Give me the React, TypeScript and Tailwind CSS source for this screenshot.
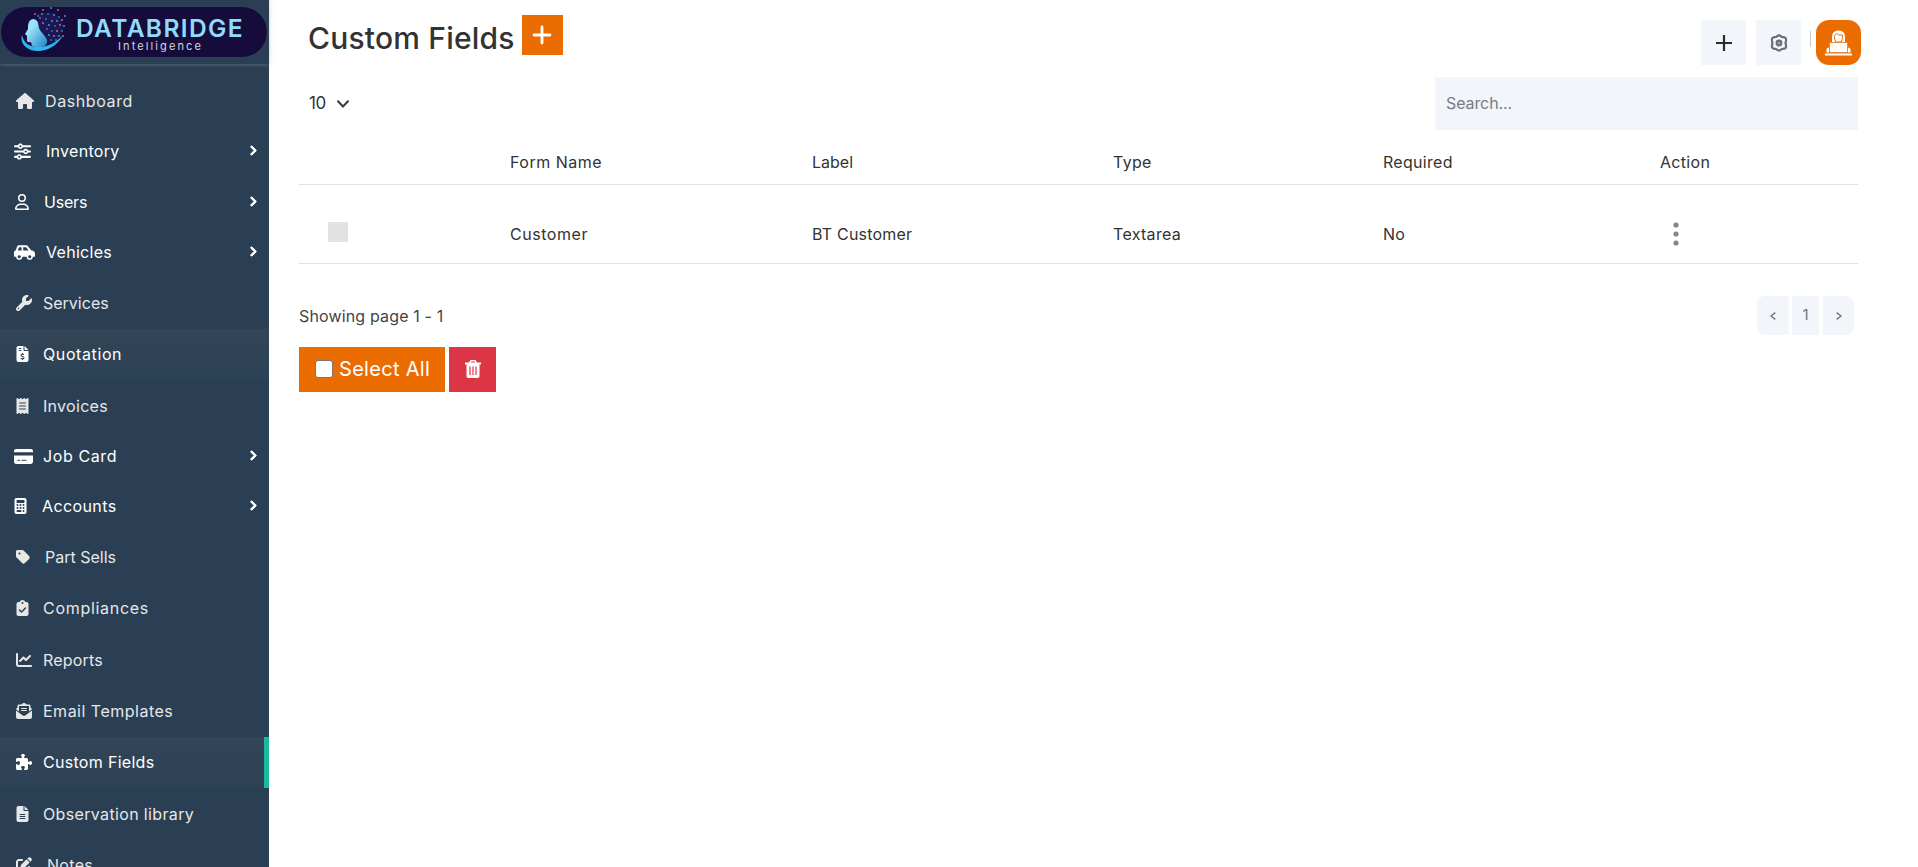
import type { IconType } from 'react-icons';
import {
  FaHouse, FaSliders, FaRegUser, FaWrench, FaFileInvoiceDollar, FaReceipt, FaCreditCard,
  FaCalculator, FaTag, FaClipboardCheck, FaChartLine, FaEnvelopeOpenText, FaPuzzlePiece, FaFileLines, FaPenToSquare,
} from 'react-icons/fa6';
import { FaCarSide, FaChevronRight } from 'react-icons/fa';

interface NavItem {
  label: string;
  icon: IconType;
  iconSize: string;
  row: string;
  iconBox: string;
  text: string;
  group?: boolean;
  hover?: boolean;
  active?: boolean;
}

const navItems: NavItem[] = [
  { label: 'Dashboard', icon: FaHouse, iconSize: 'h-4 w-[18px]', row: 'h-[51px] pb-px', iconBox: 'w-[45px] pl-4', text: 'tracking-[0.6px]' },
  { label: 'Inventory', icon: FaSliders, iconSize: 'h-[17px] w-[17px]', row: 'h-[50px] pb-0.5', iconBox: 'w-[46px] pl-[14px]', text: 'tracking-[0.3px]', group: true },
  { label: 'Users', icon: FaRegUser, iconSize: 'h-4 w-[14px]', row: 'h-[50px]', iconBox: 'w-[44px] pl-[15px]', text: 'tracking-[-0.2px]', group: true },
  { label: 'Vehicles', icon: FaCarSide, iconSize: 'h-[17px] w-[21px]', row: 'h-[50px]', iconBox: 'w-[46px] pl-[14px]', text: 'tracking-[0.3px]', group: true },
  { label: 'Services', icon: FaWrench, iconSize: 'h-4 w-4', row: 'h-[52px]', iconBox: 'w-[43px] pl-4', text: 'tracking-[0px]' },
  { label: 'Quotation', icon: FaFileInvoiceDollar, iconSize: 'h-4 w-[13px]', row: 'h-[51px] pb-px', iconBox: 'w-[43px] pl-4', text: 'tracking-[0.6px]', hover: true },
  { label: 'Invoices', icon: FaReceipt, iconSize: 'h-4 w-[13px]', row: 'h-[51px]', iconBox: 'w-[43px] pl-4', text: 'tracking-[0.3px]' },
  { label: 'Job Card', icon: FaCreditCard, iconSize: 'h-[17px] w-[19px]', row: 'h-[50px]', iconBox: 'w-[43px] pl-[14px]', text: 'tracking-[0.6px]', group: true },
  { label: 'Accounts', icon: FaCalculator, iconSize: 'h-4 w-[13px]', row: 'h-[50px]', iconBox: 'w-[42px] pl-[14px]', text: 'tracking-[0.4px]', group: true },
  { label: 'Part Sells', icon: FaTag, iconSize: 'h-4 w-[14px]', row: 'h-[52px]', iconBox: 'w-[45px] pl-4', text: 'tracking-[0px]' },
  { label: 'Compliances', icon: FaClipboardCheck, iconSize: 'h-4 w-[13px]', row: 'h-[51px] pb-px', iconBox: 'w-[43px] pl-4', text: 'tracking-[0.7px]' },
  { label: 'Reports', icon: FaChartLine, iconSize: 'h-4 w-4', row: 'h-[52px]', iconBox: 'w-[43px] pl-4', text: 'tracking-[0.2px]' },
  { label: 'Email Templates', icon: FaEnvelopeOpenText, iconSize: 'h-4 w-4', row: 'h-[51px] pb-px', iconBox: 'w-[43px] pl-4', text: 'tracking-[0.5px]' },
  { label: 'Custom Fields', icon: FaPuzzlePiece, iconSize: 'h-4 w-4', row: 'h-[51px] pb-px', iconBox: 'w-[43px] pl-4', text: 'tracking-[0.3px]', active: true },
  { label: 'Observation library', icon: FaFileLines, iconSize: 'h-4 w-[13px]', row: 'h-[52px]', iconBox: 'w-[43px] pl-4', text: 'tracking-[0.35px]' },
  { label: 'Notes', icon: FaPenToSquare, iconSize: 'h-4 w-4', row: 'h-[51px] pb-0.5', iconBox: 'w-[47px] pl-4', text: 'tracking-[0.3px]' },
];

// x, y and colour of the particles behind the head in the logo
const particles: [number, number, string][] = [
  [23, 3, '#c86a9a'], [31, 1, '#5a9be0'], [38, 3, '#d96f8f'], [15, 7, '#c86a9a'], [28, 7, '#3e74c9'], [34, 8, '#5a9be0'],
  [39, 10, '#3e74c9'], [20, 11, '#8a5fc0'], [26, 12, '#3e74c9'], [32, 14, '#d96f8f'], [37, 14, '#5a9be0'], [42, 13, '#d96f8f'],
  [23, 16, '#d96f8f'], [29, 18, '#5a9be0'], [35, 19, '#3e74c9'], [40, 18, '#c86a9a'], [44, 19, '#5a9be0'], [27, 22, '#8a5fc0'],
  [32, 24, '#3e74c9'], [37, 24, '#d96f8f'], [42, 24, '#3e74c9'], [29, 28, '#5a9be0'], [34, 29, '#c86a9a'], [39, 29, '#5a9be0'],
  [43, 29, '#d96f8f'], [31, 33, '#3e74c9'], [36, 33, '#8a5fc0'], [22, 7, '#5a9be0'], [18, 9, '#3e74c9'], [45, 9, '#5a9be0'],
];

function Logo() {
  return (
    <div className="flex h-[50px] w-[266px] rounded-full bg-[#160c3b]">
      <svg viewBox="0 0 46 48" className="ml-[19px] h-[48px] w-[46px] shrink-0">
        <defs>
          <linearGradient id="face" x1="0" x2="1" y1="0" y2="1">
            <stop offset="0.3" stopColor="#9be3fb" />
            <stop offset="1" stopColor="#1c7fc4" />
          </linearGradient>
        </defs>
        <path d="M18 7Q36 2 42 14Q46 30 29 38L18 22Z" fill="#1c2463" opacity="0.6" />
        {particles.map(([x, y, fill]) => (
          <circle key={`${x}-${y}`} cx={x} cy={y} r="0.9" fill={fill} />
        ))}
        <path
          d="M13 12C8 13 8 18 8 22L5 27L7 29L7 34Q8 36 11 35L12 39Q18 42 25 39C31 33 23 28 20 23C17 18 20 13 13 12Z"
          fill="url(#face)"
        />
        <path d="M2 28C-1 38 9 45 20 44C31 43 39 36 43 28C37 35 28 40 19 40C10 40 4 37 2 28Z" fill="#2eb5ee" />
      </svg>
      <div className="ml-[10px] flex flex-1 flex-col pt-2">
        <span className="text-[24.5px] leading-[26px] font-semibold tracking-[1.4px] text-[#8fdcfa]">DATABRIDGE</span>
        <span className="-mt-[2px] ml-[42px] text-[11px] leading-[14px] tracking-[2.1px] text-[#d6d3e2]">Intelligence</span>
      </div>
    </div>
  );
}

function Sidebar() {
  return (
    <aside className="flex w-[269px] shrink-0 flex-col bg-[#2a3f54]">
      <div className="mb-3 h-16 shrink-0 pt-[7px] pl-px shadow-[0_0_4px_rgba(160,160,160,0.6)]">
        <Logo />
      </div>
      {navItems.map((item) => {
        const Icon = item.icon;
        const lit = item.group || item.hover || item.active;
        return (
          <div
            key={item.label}
            className={`flex shrink-0 items-center ${item.row} ${lit ? 'text-white' : 'text-[#e7e7e7]'} ${
              item.hover || item.active ? 'bg-linear-to-b from-[#334556] to-[#2c4257]' : ''
            } ${item.active ? 'border-r-[5px] border-[#1abb9c]' : ''}`}
          >
            <span className={`shrink-0 ${item.iconBox}`}>
              <Icon className={item.iconSize} />
            </span>
            <span className={`text-[16px] ${item.text}`}>{item.label}</span>
            {item.group && <FaChevronRight className="mr-[10px] mb-0.5 ml-auto h-[11px] w-[11px] stroke-current stroke-[45px]" />}
          </div>
        );
      })}
    </aside>
  );
}

function TopBar() {
  return (
    <header className="flex items-start pt-[15px]">
      <h1 className="pt-px pl-[9px] text-[30px] leading-[44px] font-medium tracking-[0.2px]">Custom Fields</h1>
      <button className="ml-[7px] flex h-10 w-[41px] items-center justify-center bg-[#eb6c00]">
        <svg viewBox="0 0 20 20" className="h-5 w-5" stroke="#fff" strokeWidth="2.8" strokeLinecap="round">
          <path d="M2 10H18M10 2V18" />
        </svg>
      </button>
      <div className="mt-[5px] mr-[-3px] ml-auto flex">
        <button className="flex h-[45px] w-[45px] items-center justify-center bg-[#f2f5fa]">
          <svg viewBox="0 0 16 16" className="h-4 w-4" stroke="#2b2b2b" strokeWidth="2.2">
            <path d="M0 8H16M8 0V16" />
          </svg>
        </button>
        <button className="ml-[10px] flex h-[45px] w-[45px] items-center justify-center bg-[#f2f5fa]">
          <svg viewBox="0 0 18 18" className="h-[18px] w-[18px]" fill="none" stroke="#6b6e72">
            <path
              d="M6.800 2.500Q9 0.200 11.200 2.500Q12 3.400 13.500 3.200Q16.500 3.500 16 6.500Q15.300 9 16 11.500Q16.500 14.500 13.500 14.800Q12 14.600 11.200 15.500Q9 17.800 6.800 15.500Q6 14.600 4.500 14.800Q1.500 14.500 2 11.500Q2.700 9 2 6.500Q1.500 3.500 4.500 3.200Q6 3.400 6.800 2.500Z"
              strokeWidth="2.200"
            />
            <circle cx="9" cy="9" r="2.5" fill="#9a9ca0" strokeWidth="1.8" />
          </svg>
        </button>
        <span className="mt-[11px] ml-[9px] h-4 w-px bg-[#c9c9c9]" />
        <div className="ml-[5px] flex h-[45px] w-[45px] items-center justify-center rounded-[13px] bg-[#eb6c00]">
          <svg viewBox="0 0 27 26" className="h-[26px] w-[27px]" fill="#fff">
            <path d="M7 12V7Q7 0.500 13.500 0.500Q20 0.500 20 7V12Z" />
            <path d="M9.500 6.500Q10 4 11.500 3.500Q13 5.500 17.500 5Q18 9 16 12H11Q9.300 9.500 9.500 6.500Z" stroke="#eb6c00" />
            <path d="M4.500 12.500H22.500V22.500H4.500Z" stroke="#eb6c00" strokeWidth="0.600" />
            <path d="M1.500 22.500V19Q2 17.500 4 17.500V22.500ZM25.500 22.500V19Q25 17.500 23 17.500V22.500Z" />
            <path d="M0 23.500H27V25.500H0Z" />
          </svg>
        </div>
      </div>
    </header>
  );
}

function FieldsTable() {
  const cols = 'grid grid-cols-[211px_302px_301px_270px_277px_1fr] items-center border-b border-[#dee2e6]';
  return (
    <div className="text-[16px]">
      <div className={`${cols} h-[55px] pt-[9px] tracking-[0.3px]`}>
        <span />
        <span className="tracking-[0.5px]">Form Name</span>
        <span className="tracking-normal">Label</span>
        <span>Type</span>
        <span>Required</span>
        <span>Action</span>
      </div>
      <div className={`${cols} h-[79px] pt-5 tracking-[0.3px]`}>
        <span className="-mt-[5px] ml-[29px] h-5 w-5 bg-[#e1e2e4]" />
        <span className="tracking-[0.55px]">Customer</span>
        <span className="tracking-[0.2px]">BT Customer</span>
        <span>Textarea</span>
        <span>No</span>
        <svg viewBox="0 0 6 24" className="ml-[13px] h-6 w-[6px]" fill="#85868a">
          <circle cx="3" cy="3" r="2.6" />
          <circle cx="3" cy="12" r="2.6" />
          <circle cx="3" cy="21" r="2.6" />
        </svg>
      </div>
    </div>
  );
}

function TableFooter() {
  return (
    <>
      <div className="flex items-start justify-between pt-8 pr-1">
        <p className="mt-2 text-[16px] leading-6 tracking-[0.15px] text-[#444]">Showing page 1 - 1</p>
        <div className="flex h-[39px] text-[#6c757d]">
          <button className="flex w-8 items-center justify-center rounded-l-lg bg-[#f2f5fa]">
            <svg viewBox="0 0 6 8" className="h-2 w-[6px]" fill="none" stroke="currentColor" strokeWidth="1.4">
              <path d="M5.300 0.600L1 4L5.300 7.400" />
            </svg>
          </button>
          <button className="ml-[3px] w-[27px] bg-[#f2f5fa] text-[15px]">1</button>
          <button className="ml-1 flex w-[31px] items-center justify-center rounded-r-lg bg-[#f2f5fa]">
            <svg viewBox="0 0 6 8" className="h-2 w-[6px]" fill="none" stroke="currentColor" strokeWidth="1.4">
              <path d="M0.700 0.600L5 4L0.700 7.400" />
            </svg>
          </button>
        </div>
      </div>
      <div className="mt-3 flex gap-1">
        <label className="flex h-[45px] w-[146px] items-center bg-[#eb6c00] pb-0.5 pl-4 text-[20px] text-white">
          <input
            type="checkbox"
            className="h-[18px] w-[18px] shrink-0 appearance-none rounded-[3px] border border-[#767676] bg-white"
          />
          <span className="ml-[6px] whitespace-nowrap tracking-[0.3px]">Select All</span>
        </label>
        <button className="flex h-[45px] w-[47px] items-center justify-center bg-[#dc3545] pb-px">
          <svg viewBox="0 0 16 18" className="h-[18px] w-4" fill="#fff">
            <path d="M0 2.500H4L5 0.700Q5.300 0 6 0H10Q10.700 0 11 0.700L12 2.500H16V4.500H14.500V16Q14.500 18 12.800 18H3.200Q1.500 18 1.500 16V4.500H0ZM5.700 2.500H10.300L9.700 1.400H6.300Z" fillRule="evenodd" />
            <path d="M5 6.500V15M8 6.500V15M11 6.500V15" stroke="#dc3545" strokeWidth="1.200" />
          </svg>
        </button>
      </div>
    </>
  );
}

export default function App() {
  return (
    <div className="flex h-[867px] overflow-hidden bg-white font-['Inter',sans-serif] text-[#333]">
      <Sidebar />
      <main className="flex flex-1 flex-col pr-[60px] pl-[30px]">
        <TopBar />
        <div className="mt-3 flex justify-between">
          <button className="flex h-[53px] items-center pl-[10px] text-[17px]">
            <span className="tracking-[-0.3px]">10</span>
            <svg viewBox="0 0 12 8" className="ml-[11px] h-2 w-3" fill="none" stroke="#343a40" strokeWidth="2" strokeLinecap="round">
              <path d="M1 1.200L6 6.500L11 1.200" />
            </svg>
          </button>
          <input
            type="text"
            placeholder="Search..."
            className="h-[53px] w-[423px] bg-[#f2f5fa] px-[11px] pb-0.5 text-[16px] tracking-[-0.1px] outline-none placeholder:text-[#777d84]"
          />
        </div>
        <FieldsTable />
        <TableFooter />
      </main>
    </div>
  );
}
